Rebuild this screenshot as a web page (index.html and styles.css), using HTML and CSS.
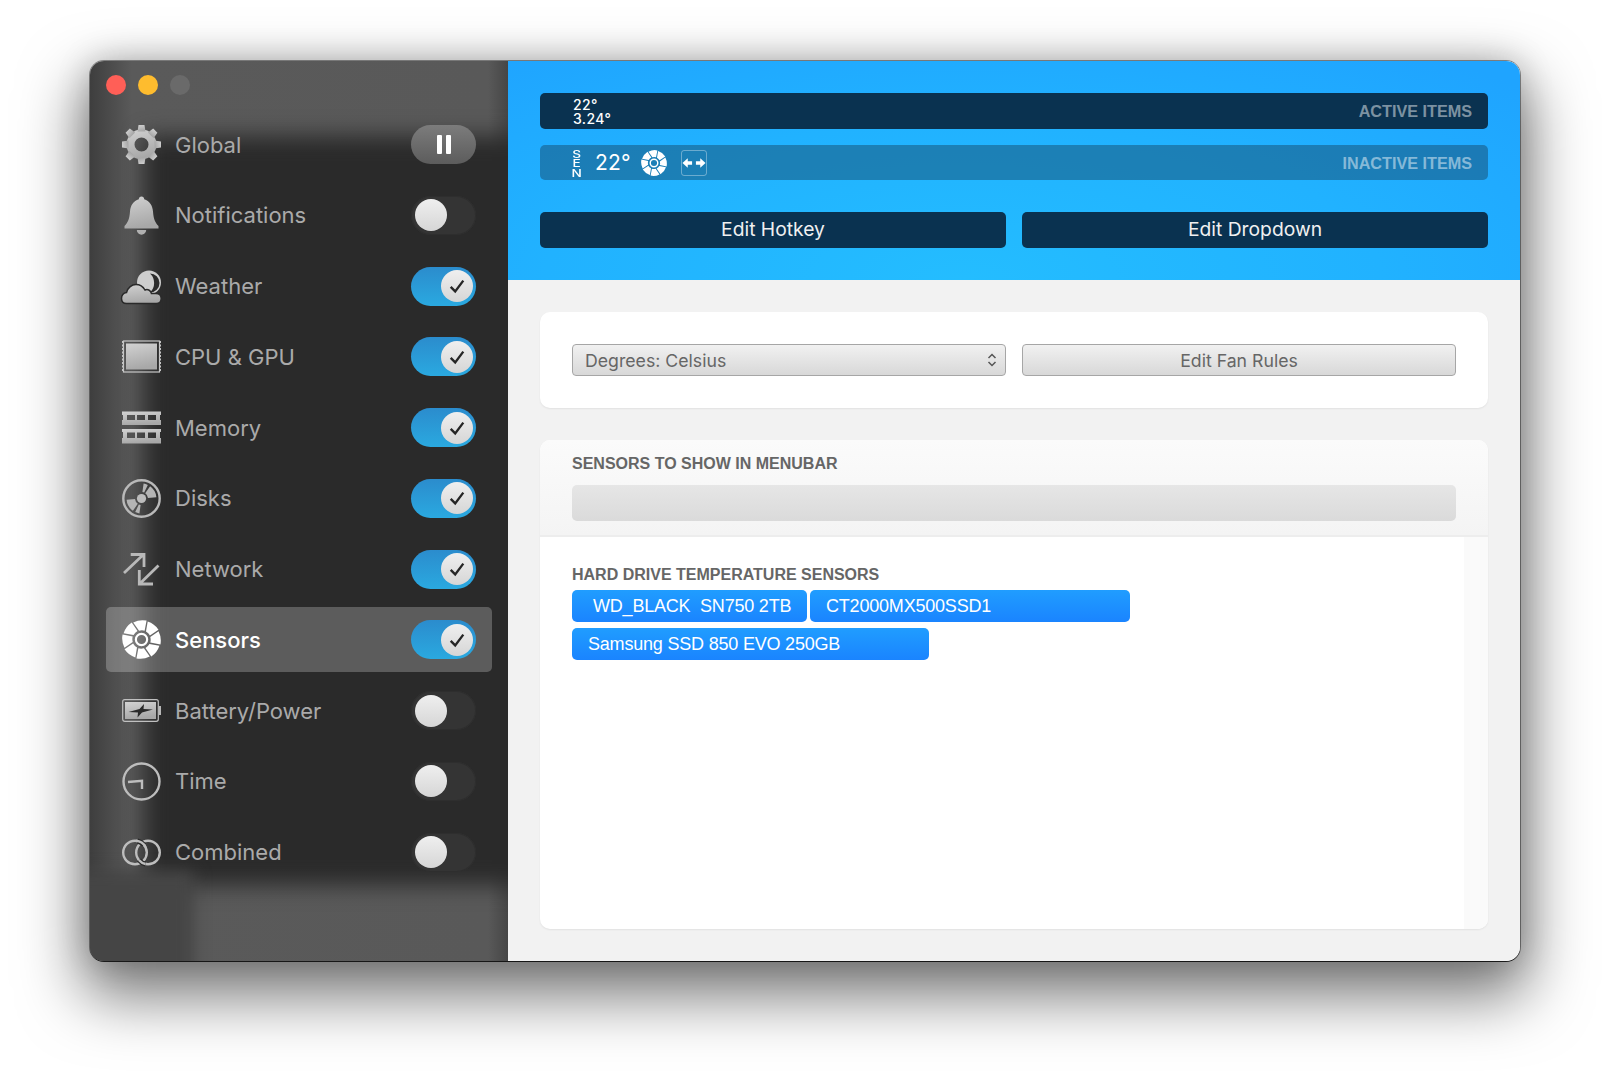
FILE: index.html
```html
<!DOCTYPE html>
<html lang="en">
<head>
<meta charset="utf-8">
<title>Sensors</title>
<link rel="stylesheet" href="styles.css">
</head>
<body>
<svg class="defs" aria-hidden="true">
  <defs>
    <linearGradient id="ig" x1="0" y1="0" x2="0.25" y2="1">
      <stop offset="0" stop-color="#d2d2d2"/>
      <stop offset="1" stop-color="#a8a8a8"/>
    </linearGradient>
    <symbol id="fan" viewBox="-20 -20 40 40">
      <g fill="currentColor">
        <path id="blade" d="M-2.500 -9 L-8.500 -17.500 Q-2 -20.800 5.200 -19.400 L3.200 -9 Q.5 -9.800 -2.500 -9Z"/>
        <use href="#blade" transform="rotate(45)"/>
        <use href="#blade" transform="rotate(90)"/>
        <use href="#blade" transform="rotate(135)"/>
        <use href="#blade" transform="rotate(180)"/>
        <use href="#blade" transform="rotate(225)"/>
        <use href="#blade" transform="rotate(270)"/>
        <use href="#blade" transform="rotate(315)"/>
      </g>
      <circle r="5.800" fill="none" stroke="currentColor" stroke-width="2.200"/>
    </symbol>
    <symbol id="check" viewBox="0 0 20 20">
      <path d="M3 11 L8 16 L17 4" fill="none" stroke="#262626" stroke-width="2.600"/>
    </symbol>
  </defs>
</svg>

<main class="window">
  <aside class="sidebar">
    <div class="lights">
      <span class="light light-red"></span>
      <span class="light light-yellow"></span>
      <span class="light light-gray"></span>
    </div>
    <nav class="menu">
      <div class="row">
        <svg class="ico" viewBox="0 0 39 39">
          <g fill="url(#ig)">
            <path fill-rule="evenodd" d="M19.500 4.500a15 15 0 1 0 0 30a15 15 0 1 0 0-30zM19.500 12.500a7 7 0 1 1 0 14a7 7 0 1 1 0-14z"/>
            <g transform="translate(19.500 19.500)">
              <path id="tooth" d="M-4 -13 L-3 -19.500 H3 L4 -13Z"/>
              <use href="#tooth" transform="rotate(45)"/>
              <use href="#tooth" transform="rotate(90)"/>
              <use href="#tooth" transform="rotate(135)"/>
              <use href="#tooth" transform="rotate(180)"/>
              <use href="#tooth" transform="rotate(225)"/>
              <use href="#tooth" transform="rotate(270)"/>
              <use href="#tooth" transform="rotate(315)"/>
            </g>
          </g>
        </svg>
        <span class="label">Global</span>
        <span class="pause"><i></i><i></i></span>
      </div>
      <div class="row">
        <svg class="ico" viewBox="0 0 39 39">
          <path fill="url(#ig)" d="M19.500 0.500c-1.600 0-2.700 1.200-2.700 2.800C11.500 4.800 8.500 9.500 8 15.500c-.6 7.500-2 11-5.500 14.500L2.500 32.500H36.500V30C33 26.500 31.600 23 31 15.500c-.5-6-3.500-10.700-8.800-12.200 0-1.600-1.100-2.800-2.700-2.800z"/>
          <path fill="#b0b0b0" d="M14.800 34h9.400a4.700 4.700 0 0 1-9.400 0z"/>
        </svg>
        <span class="label">Notifications</span>
        <span class="toggle"><span class="knob"></span></span>
      </div>
      <div class="row">
        <svg class="ico" viewBox="0 0 39 39">
          <circle cx="27" cy="15.500" r="12" fill="#cdcdcd"/>
          <path fill="#2a2a2a" d="M28 6.500A9.500 9.500 0 0 1 28 25.500A13 13 0 0 0 28 6.500Z"/>
          <path fill="url(#ig)" stroke="#2a2a2a" stroke-width="1.500" d="M4.500 36.500C1.500 36.500-.5 34.500-.5 31.500c0-3 2-5.500 5-6C5.500 21 9.500 17.500 14 17.500c4 0 7 2 9 5.500 1.200-.5 2.500-.6 3.800 0 1.500.8 2.400 2 2.700 3.500h4.500c3 0 5.200 2.200 5.200 5s-2 5-5 5z"/>
        </svg>
        <span class="label">Weather</span>
        <span class="toggle on"><span class="knob"><svg class="tick"><use href="#check"/></svg></span></span>
      </div>
      <div class="row">
        <svg class="ico" viewBox="0 0 39 39">
          <rect x="1.500" y="4" width="36" height="31" fill="none" stroke="#c8c8c8" stroke-width="1.200"/>
          <path d="M1 4V35M38 4V35" stroke="#c4c4c4" stroke-width="2" stroke-dasharray="2 1.500"/>
          <rect x="4" y="6.500" width="31" height="26" fill="url(#ig)"/>
        </svg>
        <span class="label">CPU &amp; GPU</span>
        <span class="toggle on"><span class="knob"><svg class="tick"><use href="#check"/></svg></span></span>
      </div>
      <div class="row">
        <svg class="ico" viewBox="0 0 39 39">
          <path fill="url(#ig)" fill-rule="evenodd" d="M0 3.500H39V7H38V12H39V17H0V12H1V7H0ZM5 7V12H13V7ZM15 7V12H23V7ZM26 7V12H34V7Z"/>
          <path fill="url(#ig)" fill-rule="evenodd" d="M0 21H39V24H38V30H39V35.500H0V30H1V24H0ZM5 24.500V30H13V24.500ZM15 24.500V30H23V24.500ZM26 24.500V30H34V24.500Z"/>
        </svg>
        <span class="label">Memory</span>
        <span class="toggle on"><span class="knob"><svg class="tick"><use href="#check"/></svg></span></span>
      </div>
      <div class="row">
        <svg class="ico" viewBox="0 0 39 39">
          <circle cx="19.500" cy="19.500" r="18.200" fill="none" stroke="#b9b9b9" stroke-width="2.400"/>
          <circle cx="19.500" cy="19.500" r="4.600" fill="#bcbcbc"/>
          <g fill="#b4b4b4">
            <path d="M28.100 7.200A15 15 0 0 1 34.400 18.200L26 18.900A6.500 6.500 0 0 0 23.200 14.200Z"/>
            <path d="M21.600 4.600A15 15 0 0 1 25.800 5.900L22.200 13.600A6.500 6.500 0 0 0 20.400 13.100Z"/>
            <g transform="rotate(180 19.500 19.500)">
              <path d="M28.100 7.200A15 15 0 0 1 34.400 18.200L26 18.900A6.500 6.500 0 0 0 23.200 14.200Z"/>
              <path d="M21.600 4.600A15 15 0 0 1 25.800 5.900L22.200 13.600A6.500 6.500 0 0 0 20.400 13.100Z"/>
            </g>
          </g>
        </svg>
        <span class="label">Disks</span>
        <span class="toggle on"><span class="knob"><svg class="tick"><use href="#check"/></svg></span></span>
      </div>
      <div class="row">
        <svg class="ico" viewBox="0 0 39 39">
          <g fill="none" stroke="#b9b9b9" stroke-width="2.800">
            <path d="M2 23L21.500 4.500M8.700 4.500H22V17"/>
            <path d="M36.500 15.500L17.500 34M17.300 20V34H31"/>
          </g>
        </svg>
        <span class="label">Network</span>
        <span class="toggle on"><span class="knob"><svg class="tick"><use href="#check"/></svg></span></span>
      </div>
      <div class="row selected">
        <svg class="ico ico-white"><use href="#fan"/></svg>
        <span class="label">Sensors</span>
        <span class="toggle on"><span class="knob"><svg class="tick"><use href="#check"/></svg></span></span>
      </div>
      <div class="row">
        <svg class="ico" viewBox="0 0 39 39">
          <rect x="0.700" y="8.700" width="35.600" height="21.600" rx="2" fill="none" stroke="#c0c0c0" stroke-width="1.200"/>
          <rect x="3" y="11" width="31" height="17" fill="url(#ig)"/>
          <rect x="37" y="15" width="2" height="9" fill="#b8b8b8"/>
          <path fill="#2a2a2a" d="M6.500 21L17.500 18L22 13L21.500 18L31 18.500L20 21.500L15.500 26.500L16 21.500Z"/>
        </svg>
        <span class="label">Battery/Power</span>
        <span class="toggle"><span class="knob"></span></span>
      </div>
      <div class="row">
        <svg class="ico" viewBox="0 0 39 39">
          <circle cx="19.500" cy="19.500" r="18" fill="none" stroke="#bdbdbd" stroke-width="2.400"/>
          <path d="M6 20L20 18.800V27" fill="none" stroke="#bdbdbd" stroke-width="2.400"/>
        </svg>
        <span class="label">Time</span>
        <span class="toggle"><span class="knob"></span></span>
      </div>
      <div class="row">
        <svg class="ico" viewBox="0 0 39 39">
          <g fill="none">
            <circle cx="13" cy="19.500" r="11.800" stroke="#bdbdbd" stroke-width="2.400"/>
            <circle cx="26" cy="19.500" r="11.800" stroke="#bdbdbd" stroke-width="2.400"/>
            <path d="M16.900 27A11.800 11.800 0 0 0 23.500 31" stroke="#2a2a2a" stroke-width="5"/>
            <path d="M16.900 27A11.800 11.800 0 0 0 23.500 31" stroke="#bdbdbd" stroke-width="2.400"/>
            <path d="M15.500 8A11.800 11.800 0 0 1 22.100 12" stroke="#2a2a2a" stroke-width="5"/>
            <path d="M14 7.800A11.800 11.800 0 0 1 23.500 14" stroke="#bdbdbd" stroke-width="2.400"/>
          </g>
        </svg>
        <span class="label">Combined</span>
        <span class="toggle"><span class="knob"></span></span>
      </div>
    </nav>
  </aside>

  <section class="content">
    <header class="hero">
      <div class="bar bar-active">
        <div class="stack"><span>22°</span><span>3.24°</span></div>
        <span class="bar-tag">ACTIVE ITEMS</span>
      </div>
      <div class="bar bar-inactive">
        <div class="sen">SEN</div>
        <span class="temp">22°</span>
        <svg class="fan-small"><use href="#fan"/></svg>
        <span class="arrows">
          <svg viewBox="0 0 25 25" class="arrows-svg">
            <path fill="#fff" d="M0.500 12.500L6 7.500V10.800H10.500V14.200H6V17.500ZM24.500 12.500L19 7.500V10.800H14.500V14.200H19V17.500Z"/>
          </svg>
        </span>
        <span class="bar-tag">INACTIVE ITEMS</span>
      </div>
      <div class="hero-actions">
        <button class="dark-btn" type="button">Edit Hotkey</button>
        <button class="dark-btn" type="button">Edit Dropdown</button>
      </div>
    </header>

    <div class="body">
      <section class="card card-controls">
        <div class="select">
          <span>Degrees: Celsius</span>
          <svg class="updown" viewBox="0 0 10 16">
            <path d="M1.500 6L5 2.500L8.500 6M1.500 10L5 13.500L8.500 10" fill="none" stroke="#555" stroke-width="1.500"/>
          </svg>
        </div>
        <button class="gray-btn" type="button">Edit Fan Rules</button>
      </section>

      <section class="card card-sensors">
        <div class="sensors-head">
          <h2 class="section-title">SENSORS TO SHOW IN MENUBAR</h2>
          <div class="dropzone"></div>
        </div>
        <div class="sensors-body">
          <div class="sensors-main">
            <h2 class="section-title">HARD DRIVE TEMPERATURE SENSORS</h2>
            <div class="chips">
              <span class="chip chip-wd">WD_BLACK  SN750 2TB</span>
              <span class="chip chip-ct">CT2000MX500SSD1</span>
              <span class="chip chip-sam">Samsung SSD 850 EVO 250GB</span>
            </div>
          </div>
          <div class="scroll-strip"></div>
        </div>
      </section>
    </div>
  </section>
</main>
</body>
</html>
```

FILE: styles.css
```css
* { box-sizing: border-box; }

html, body { margin: 0; height: 100%; }

body {
  background: #fff;
  padding: 61px 0 0 90px;
  overflow: hidden;
  font-family: Inter, "Liberation Sans", sans-serif;
}

.defs { display: block; width: 0; height: 0; }

.window {
  display: flex;
  width: 1430px;
  height: 900px;
  border-radius: 14px;
  overflow: hidden;
  box-shadow: 0 1px 0 0 rgba(0,0,0,.7), 0 0 0 1px rgba(0,0,0,.4), 0 28px 62px 8px rgba(0,0,0,.52), 0 0 34px rgba(0,0,0,.2);
}

/* Sidebar */
.sidebar {
  position: relative;
  isolation: isolate;
  overflow: hidden;
  width: 418px;
  flex: none;
  background: linear-gradient(to right, #3e3e3e 0, #5a5a5a 42px, #595959 398px, #464646 418px);
  padding-top: 14px;
}

/* blurred desktop seen through the glass: dark middle */
.sidebar::before {
  content: "";
  position: absolute;
  z-index: -1;
  left: 54px;
  right: -40px;
  top: 75px;
  bottom: 76px;
  background: #2a2a2a;
  filter: blur(11px);
}

/* darker lower left corner */
.sidebar::after {
  content: "";
  position: absolute;
  z-index: -1;
  left: -20px;
  width: 124px;
  top: 810px;
  bottom: -30px;
  background: #454545;
  filter: blur(8px);
}

.lights { display: flex; gap: 12px; padding-left: 16px; height: 37px; }
.light { width: 20px; height: 20px; border-radius: 50%; }
.light-red { background: #ff5f57; }
.light-yellow { background: #febc2e; }
.light-gray { background: #6a6a6a; }

.menu {
  display: flex;
  flex-direction: column;
  gap: 5.75px;
  padding: 0 16px;
}

.row {
  display: flex;
  align-items: center;
  height: 65px;
  padding: 0 16px;
  border-radius: 5px;
  color: #aaa;
}

.row.selected {
  background: rgba(255,255,255,.24);
  color: #fff;
}
.row.selected .label { font-weight: 500; }

.ico { width: 39px; height: 39px; flex: none; overflow: visible; }
.ico-white { color: #fff; }

.label {
  flex: 1;
  margin-left: 14px;
  font-size: 22px;
  line-height: 1;
}

.toggle {
  width: 65px;
  height: 39px;
  flex: none;
  border-radius: 20px;
  background: #343434;
  box-shadow: inset 0 0 0 1px #2e2e2e;
  display: flex;
  align-items: center;
  padding: 0 4px;
}
.toggle.on {
  background: linear-gradient(#2b8ccd, #2aa9e0);
  box-shadow: none;
  justify-content: flex-end;
  padding: 0 3px;
}
.knob {
  width: 32px;
  height: 32px;
  border-radius: 50%;
  background: linear-gradient(#efefef, #d6d6d6);
  display: flex;
  align-items: center;
  justify-content: center;
  padding-right: 1px;
}
.tick { width: 18px; height: 18px; }

.pause {
  width: 65px;
  height: 39px;
  flex: none;
  border-radius: 20px;
  background: linear-gradient(#7c7c7c, #5c5c5c);
  display: flex;
  align-items: center;
  justify-content: center;
  gap: 4px;
}
.pause i { width: 5px; height: 19px; background: #fff; border-radius: 1px; }

/* Content */
.content {
  flex: 1;
  min-width: 0;
  display: flex;
  flex-direction: column;
  background: #f2f2f2;
}

.hero {
  height: 219px;
  padding: 32px 32px 0;
  background: radial-gradient(ellipse 75% 130% at 45% 100%, #24bdff 0%, #21b2ff 55%, #1fa4ff 100%);
  display: flex;
  flex-direction: column;
}

.bar {
  height: 36px;
  border-radius: 5px;
  display: flex;
  align-items: center;
  padding: 0 16px 0 33px;
  color: #fff;
}
.bar-active { background: #0a3250; }
.bar-inactive { height: 35px; background: rgba(22, 58, 82, .42); margin-top: 16px; }

.bar-tag {
  margin-left: auto;
  padding-top: 1px;
  font-family: "Liberation Sans", sans-serif;
  font-weight: 700;
  font-size: 16.200px;
  color: rgba(255,255,255,.48);
}

.stack {
  display: flex;
  flex-direction: column;
  padding-top: 1px;
  font-size: 14px;
  line-height: 14px;
  font-weight: 500;
  letter-spacing: .4px;
}

.sen {
  writing-mode: vertical-rl;
  text-orientation: upright;
  width: 10px;
  margin-left: -2px;
  margin-right: 1px;
  font-size: 10.500px;
  line-height: 10px;
  letter-spacing: -3.600px;
  font-weight: 500;
  transform: scaleX(1.300);
}

.temp { font-size: 21px; margin-left: 13px; letter-spacing: .2px; }
.fan-small { width: 26px; height: 26px; margin-left: 10px; color: #fff; }
.arrows {
  width: 26px;
  height: 26px;
  margin-left: 14px;
  border: 1.500px solid rgba(255,255,255,.35);
  border-radius: 3px;
  display: flex;
}
.arrows-svg { width: 100%; height: 100%; }

.hero-actions { display: flex; gap: 16px; margin-top: 32px; }
.dark-btn {
  flex: 1;
  height: 36px;
  border: 0;
  border-radius: 5px;
  padding: 0 0 2px;
  background: #0a3250;
  color: #f0f0f0;
  font: 400 19.300px Inter, "Liberation Sans", sans-serif;
}

.body {
  flex: 1;
  min-height: 0;
  padding: 32px;
  display: flex;
  flex-direction: column;
  gap: 32px;
}

.card {
  background: #fff;
  border-radius: 10px;
  box-shadow: 0 1px 2px rgba(0,0,0,.07);
  overflow: hidden;
}

.card-controls {
  height: 96px;
  flex: none;
  padding: 32px;
  display: grid;
  grid-template-columns: 1fr 1fr;
  gap: 16px;
  align-items: start;
}

.select, .gray-btn {
  min-width: 0;
  height: 32px;
  border: 1.500px solid #a6a6a6;
  border-radius: 4px;
  background: linear-gradient(#f1f1f1, #d8d8d8);
  color: #666;
  font: 400 17.700px Inter, "Liberation Sans", sans-serif;
}
.select {
  display: flex;
  align-items: center;
  justify-content: space-between;
  padding: 0 8px 0 12px;
}
.updown { width: 10px; height: 16px; }

.card-sensors {
  flex: 1;
  min-height: 0;
  display: flex;
  flex-direction: column;
}

.sensors-head {
  height: 97px;
  padding: 15px 32px 0;
  background: linear-gradient(#fbfbfb, #f4f4f4);
  border-bottom: 2px solid #ededed;
}

.section-title {
  margin: 0;
  font: 700 16px/18px "Liberation Sans", sans-serif;
  color: #666;
}

.dropzone {
  height: 36px;
  margin-top: 12px;
  border-radius: 5px;
  background: linear-gradient(#e6e6e6, #dadada);
}

.sensors-body { flex: 1; display: flex; min-height: 0; }
.sensors-main { flex: 1; padding: 29px 32px 0; }
.scroll-strip { width: 24px; background: #fafafa; }

.chips {
  display: flex;
  flex-wrap: wrap;
  gap: 6px 3px;
  margin-top: 6px;
  width: 600px;
}
.chip {
  height: 32px;
  border-radius: 5px;
  background: linear-gradient(#209dff, #1a84ff);
  color: #fff;
  font: 400 18px/32px "Liberation Sans", sans-serif;
  letter-spacing: -.2px;
  white-space: pre;
  padding-left: 16px;
}
.chip-wd { width: 235px; padding-left: 21px; }
.chip-ct { width: 320px; }
.chip-sam { width: 357px; }
```
